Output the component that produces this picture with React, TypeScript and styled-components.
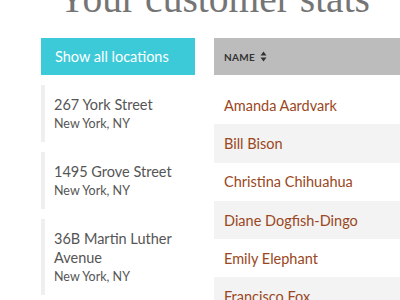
import React from "react";
import styled, { createGlobalStyle } from "styled-components";

const Global = createGlobalStyle`
  html, body { margin: 0; padding: 0; background: #fff; }
  body { font-family: Lato, "Open Sans", sans-serif; overflow: hidden; }
`;

const Page = styled.div`
  width: 400px;
  height: 300px;
  overflow: hidden;
`;

const Title = styled.h1`
  margin: -20px 0 0 58px;
  font-family: "Liberation Serif", "DejaVu Serif", serif;
  font-weight: 400;
  font-size: 39.5px;
  line-height: 39px;
  color: #757575;
  white-space: nowrap;
`;

const Columns = styled.div`
  display: flex;
  gap: 19px;
  margin: 19px 0 0 41px;
`;

const Sidebar = styled.aside`
  width: 154px;
  flex: none;
  display: flex;
  flex-direction: column;
  gap: 10px;
`;

const ShowAll = styled.button`
  height: 37px;
  border: 0;
  margin: 0;
  padding: 0 14px;
  text-align: left;
  background: #3ccad9;
  color: #fff;
  font-family: Lato, "Open Sans", sans-serif;
  font-size: 14.5px;
`;

const Card = styled.div`
  border-left: 4px solid #efefef;
  padding: 10px 10px 10px 9px;
  color: #555;
`;

const Street = styled.div`
  font-size: 14.5px;
  line-height: 19px;
`;

const City = styled.div`
  font-size: 12.5px;
  line-height: 17px;
  margin-top: 1px;
`;

const Table = styled.div`
  flex: 1;
  min-width: 200px;
`;

const Head = styled.div`
  height: 37px;
  background: #bcbcbc;
  display: flex;
  align-items: center;
  gap: 5px;
  padding-left: 10px;
  margin-bottom: 11px;
  color: #333;
  font-size: 10px;
  font-weight: 700;
  letter-spacing: 0.3px;
`;

const Row = styled.div<{ $striped: boolean }>`
  height: 38.3px;
  display: flex;
  align-items: center;
  padding-left: 10px;
  background: ${(p) => (p.$striped ? "#f3f3f3" : "#fff")};
  color: #9a4722;
  font-size: 14.5px;
`;

const SortIcon = () => (
  <svg width="7" height="11" viewBox="0 0 7 11">
    <path d="M3.5 0.5 L6.5 4.5 L0.5 4.5 Z" fill="#333" />
    <path d="M3.5 10.5 L6.5 6.5 L0.5 6.5 Z" fill="#333" />
  </svg>
);

const locations = [
  { street: "267 York Street", city: "New York, NY" },
  { street: "1495 Grove Street", city: "New York, NY" },
  { street: "36B Martin Luther Avenue", city: "New York, NY" },
];

const names = [
  "Amanda Aardvark",
  "Bill Bison",
  "Christina Chihuahua",
  "Diane Dogfish-Dingo",
  "Emily Elephant",
  "Francisco Fox",
];

export default function App() {
  return (
    <Page>
      <Global />
      <Title>Your customer stats</Title>
      <Columns>
        <Sidebar>
          <ShowAll>Show all locations</ShowAll>
          {locations.map((l) => (
            <Card key={l.street}>
              <Street>{l.street}</Street>
              <City>{l.city}</City>
            </Card>
          ))}
        </Sidebar>
        <Table>
          <Head>
            NAME <SortIcon />
          </Head>
          {names.map((n, i) => (
            <Row key={n} $striped={i % 2 === 1}>
              {n}
            </Row>
          ))}
        </Table>
      </Columns>
    </Page>
  );
}
